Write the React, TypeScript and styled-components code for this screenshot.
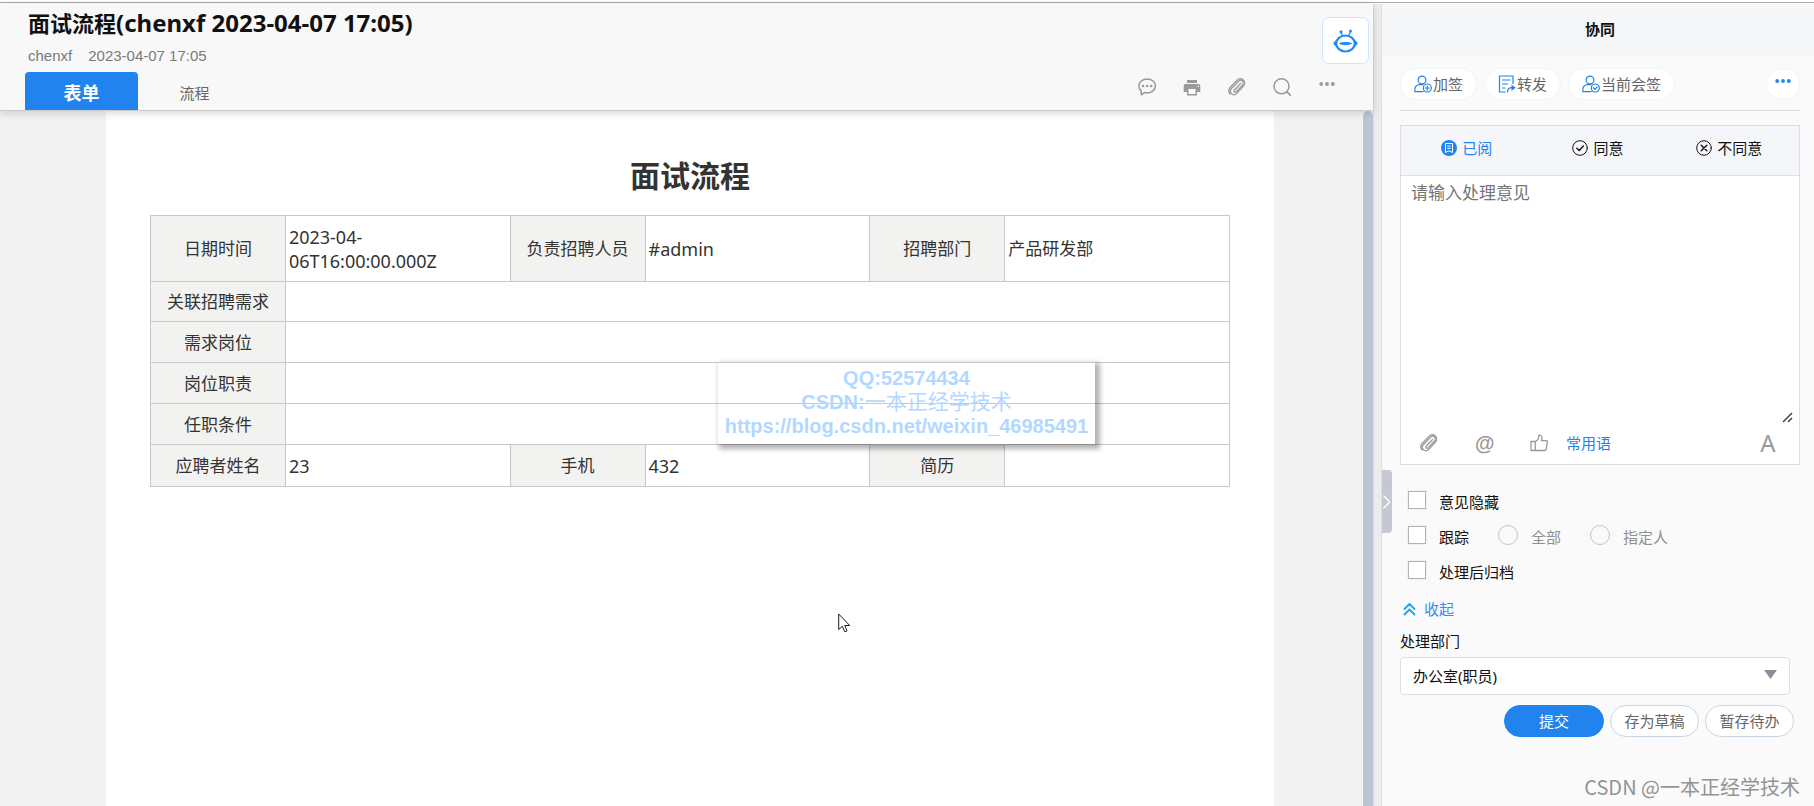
import React from "react";
import styled, { createGlobalStyle, css } from "styled-components";

const GlobalStyle = createGlobalStyle`
  *, *::before, *::after { box-sizing: border-box; }
  body {
    margin: 0;
    background: #fff;
    color: #111;
    font-family: "Noto Sans", "Noto Sans CJK SC", sans-serif;
    font-size: 15px;
    line-height: 20px;
  }
  button, input, textarea, select { font: inherit; color: inherit; }
  button { padding: 0; border: 0; background: none; cursor: pointer; }
  svg { display: block; flex: none; }
`;

const Page = styled.div`
  display: flex;
  flex-direction: column;
  min-height: 100vh;
`;

const TopRule = styled.div`
  height: 4px;
  padding-top: 2px;
  background: #a9a9a9 content-box;
  border-bottom: 1px solid #fff;
`;

const Columns = styled.div`
  display: flex;
  flex: 1;
`;

const Main = styled.main`
  display: flex;
  flex: 1;
  flex-direction: column;
  min-width: 0;
`;

const Header = styled.header`
  position: relative;
  z-index: 1;
  display: flex;
  justify-content: space-between;
  height: 107px;
  padding: 0 4px 0 25px;
  background: #f8f8f8;
  border-bottom: 1px solid #cbcbcb;
  box-shadow: 0 2px 8px rgba(0, 0, 0, 0.16);
`;

const Heading = styled.div`
  display: flex;
  flex-direction: column;
  justify-content: space-between;
`;

const Title = styled.h1`
  margin: 0;
  padding: 3px 3px 0;
  font-size: 22px;
  line-height: 32px;
  font-weight: 700;
`;

const TitleDetail = styled.span`
  font-size: 24px;
`;

const Meta = styled.div`
  display: flex;
  gap: 16px;
  padding-left: 3px;
  color: #7a7a7a;
  font-family: "Liberation Sans", sans-serif;
`;

const Tabs = styled.div`
  display: flex;
`;

const Tab = styled.button<{ $active?: boolean }>`
  width: 113px;
  height: 38px;
  padding-top: 3px;
  border-radius: 4px 4px 0 0;
  color: #666;
  ${(p) =>
    p.$active &&
    css`
      background: #2083ee;
      color: #fff;
      font-size: 18px;
      font-weight: 700;
    `}
`;

const HeaderSide = styled.div`
  display: flex;
  flex-direction: column;
  align-items: flex-end;
  justify-content: space-between;
  padding: 13px 0;
`;

const RobotButton = styled.button`
  display: grid;
  place-items: center;
  width: 47px;
  height: 47px;
  border: 1px solid #cfe4fa;
  border-radius: 7px;
  background: #fff;
  color: #1f8bff;
`;

const Tools = styled.div`
  display: flex;
  gap: 27px;
  padding-right: 33px;
  color: #999;
`;

const IconButton = styled.button`
  display: grid;
  place-items: center;
  width: 18px;
  height: 20px;
`;

const Body = styled.div`
  position: relative;
  display: flex;
  flex: 1;
  background: #f2f2f2;
`;

const Paper = styled.article`
  flex: 1;
  min-width: 0;
  margin: 0 89px 0 106px;
  padding: 45px 44px;
  background: #fff;
  color: #333;
`;

const ScrollThumb = styled.div`
  width: 10px;
  border-radius: 5px 5px 0 0;
  background: #bcc5d6;
`;

const FormTitle = styled.h2`
  margin: 0 0 19px;
  font-size: 30px;
  line-height: 40px;
  font-weight: 700;
  text-align: center;
`;

const FormArea = styled.div`
  position: relative;
`;

const FormTable = styled.table`
  width: 100%;
  border-collapse: collapse;
  table-layout: fixed;
  font-size: 17px;
  line-height: 24px;
`;

const LabelCol = styled.col`
  width: 12.5%;
`;

const Row = styled.tr<{ $height: number }>`
  height: ${(p) => p.$height}px;
`;

const LabelCell = styled.th`
  padding: 1px 0 0;
  border: 1px solid #c8c8c8;
  background: #f2f2f0;
  font-weight: 400;
`;

const ValueCell = styled.td<{ $latin?: boolean }>`
  padding: 1px 3px 0;
  border: 1px solid #c8c8c8;
  font-size: ${(p) => (p.$latin ? 18 : 17)}px;
`;

const Contact = styled.address`
  position: absolute;
  top: 147px;
  left: 568px;
  width: 377px;
  height: 82px;
  padding-top: 4px;
  box-shadow: 3px 3px 5px 2px rgba(0, 0, 0, 0.3);
  color: #b3d8ff;
  font: 700 20px/24px "Liberation Sans", "Noto Sans CJK SC", sans-serif;
  text-align: center;
  white-space: nowrap;
`;

const ContactName = styled.span`
  font-size: 21px;
  font-weight: 400;
`;

const Pointer = styled.svg`
  position: absolute;
  top: 502px;
  left: 838px;
`;

const Splitter = styled.div`
  width: 9px;
  background: #ececec;
  border: solid #dedede;
  border-width: 0 1px;
`;

const Side = styled.aside`
  position: relative;
  display: flex;
  flex-direction: column;
  width: 432px;
  background: #fafafa;
`;

const SideTitle = styled.h2`
  margin: 0;
  padding-left: 4px;
  background: #f5f6f8;
  font-size: 15px;
  line-height: 51px;
  font-weight: 700;
  text-align: center;
`;

const SideBody = styled.div`
  display: flex;
  flex: 1;
  flex-direction: column;
  padding: 13px 14px 4px 18px;
`;

const Actions = styled.div`
  display: flex;
  gap: 7px;
  padding-bottom: 10px;
  border-bottom: 1px solid #dfe0e2;
`;

const Chip = styled.button<{ $end?: boolean }>`
  display: flex;
  align-items: center;
  justify-content: center;
  gap: 1px;
  min-width: 32px;
  height: 32px;
  padding: 0 ${(p) => (p.$end ? 8 : 13)}px;
  margin-left: ${(p) => (p.$end ? "auto" : 0)};
  border: 1px solid #eef5f9;
  border-radius: 16px;
  background: #fff;
  color: #666;
  svg { color: #2083ee; }
`;

const Opinion = styled.section`
  margin-top: 14px;
  border: 1px solid #dcdee2;
  background: #fff;
`;

const Attitudes = styled.div`
  display: grid;
  grid-template-columns: repeat(3, 1fr);
  height: 50px;
  padding-right: 4px;
  background: #f4f6f9;
  border-bottom: 1px solid #dcdee2;
`;

const Attitude = styled.button<{ $active?: boolean }>`
  display: flex;
  align-items: center;
  justify-content: center;
  gap: 5px;
  padding-bottom: 6px;
  color: ${(p) => (p.$active ? "#2083ee" : "#111")};
`;

const OpinionText = styled.textarea`
  display: block;
  width: 100%;
  height: 248px;
  padding: 5px 10px;
  border: 0;
  outline: 0;
  resize: none;
  background: transparent;
  font-size: 17px;
  line-height: 24px;
  &::placeholder { color: #757575; }
`;

const TextWrap = styled.div`
  position: relative;
`;

const Grip = styled.svg`
  position: absolute;
  right: 5px;
  bottom: 1px;
`;

const OpinionTools = styled.div`
  display: flex;
  align-items: center;
  gap: 37px;
  height: 40px;
  padding: 0 22px 3px 19px;
  color: #999;
`;

const Phrases = styled.button`
  margin-left: -19px;
  color: #2083ee;
`;

const FontButton = styled(IconButton)`
  margin-left: auto;
`;

const Options = styled.div`
  display: flex;
  flex-direction: column;
  gap: 15px;
  padding: 25px 8px 0;
`;

const OptionRow = styled.div`
  display: flex;
  gap: 29px;
`;

const Choice = styled.label<{ $muted?: boolean }>`
  display: flex;
  align-items: center;
  gap: 13px;
  height: 20px;
  color: ${(p) => (p.$muted ? "#909090" : "#111")};
`;

const ChoiceText = styled.span`
  padding-top: 4px;
`;

const Checkbox = styled.input`
  appearance: none;
  width: 18px;
  height: 18px;
  margin: 0;
  border: 1px solid #b4b4b4;
  outline: 1px solid #f0f0f0;
  background: #fff;
`;

const Radio = styled.input`
  appearance: none;
  width: 20px;
  height: 20px;
  margin: 0;
  border: 1px solid #c4c4c4;
  border-radius: 50%;
`;

const Collapse = styled.button`
  display: flex;
  align-items: center;
  align-self: flex-start;
  gap: 8px;
  margin-top: 19px;
  padding-left: 3px;
  color: #2f8ff5;
  svg { color: #1ca4f5; }
`;

const DeptLabel = styled.label`
  margin-top: 12px;
`;

const SelectBox = styled.div`
  position: relative;
  margin: 6px 10px 0 0;
`;

const DeptSelect = styled.select`
  display: block;
  appearance: none;
  width: 100%;
  height: 38px;
  padding: 0 12px;
  border: 1px solid #dcdfe6;
  border-radius: 4px;
  background: #fff;
`;

const Caret = styled.svg`
  position: absolute;
  top: 13px;
  right: 13px;
  pointer-events: none;
`;

const Buttons = styled.div`
  display: flex;
  justify-content: flex-end;
  gap: 6px;
  margin: 10px 6px 0 0;
`;

const ActionButton = styled.button<{ $primary?: boolean }>`
  width: ${(p) => (p.$primary ? 100 : 89)}px;
  height: 32px;
  border: 1px solid ${(p) => (p.$primary ? "#2083ee" : "#c9d6e2")};
  border-radius: 16px;
  background: ${(p) => (p.$primary ? "#2083ee" : "#fff")};
  color: ${(p) => (p.$primary ? "#fff" : "#666")};
`;

const Credit = styled.footer`
  margin-top: auto;
  color: #949494;
  font: 400 20px/30px "Noto Sans CJK SC", sans-serif;
  text-align: right;
`;

const Fold = styled.button`
  position: absolute;
  top: 466px;
  left: 0;
  display: grid;
  place-items: center;
  width: 10px;
  height: 63px;
  border-radius: 0 4px 4px 0;
  background: #c5c8d0;
`;

const line = {
  fill: "none",
  stroke: "currentColor",
  strokeLinecap: "round",
  strokeLinejoin: "round",
} as const;

const RobotIcon = () => (
  <svg width="25" height="24" viewBox="0 0 25 24" fill="none" stroke="currentColor">
    <ellipse cx="12.5" cy="14.5" rx="9.3" ry="8" strokeWidth="2.2" />
    <path d="M3.3 11.2C1.5 12 .5 13.2.5 14.3s1 2.3 2.8 3zM21.7 11.2c1.8.8 2.800 2 2.800 3.100s-1 2.300-2.800 3z" fill="currentColor" stroke="none" />
    <path d="M6.500 14.500c2-.9 4-1 6-1s4 .1 6 1c-2 .9-4 1.200-6 1.200s-4-.3-6-1.200z" fill="currentColor" />
    <path d="M9.500 7L8 2.800M15.500 7l2-4.500" strokeWidth="1.300" />
    <circle cx="8" cy="2.800" r="1.500" fill="currentColor" stroke="none" />
    <circle cx="17.500" cy="2" r="1.500" fill="currentColor" stroke="none" />
  </svg>
);

const CommentIcon = () => (
  <svg width="18" height="18" viewBox="0 0 18 18">
    <path {...line} strokeWidth="1.500" d="M9.200 1C4.600 1 .8 4 .8 7.900c0 2 .9 3.700 2.400 5v3.900l3.300-2.200c.9.200 1.700.3 2.700.3 4.600 0 8.200-3.100 8.200-7S13.800 1 9.200 1z" />
    <g fill="currentColor">
      <circle cx="5" cy="8" r="1.300" />
      <circle cx="9.100" cy="8" r="1.300" />
      <circle cx="13.200" cy="8" r="1.300" />
    </g>
  </svg>
);

const PrinterIcon = () => (
  <svg width="18" height="18" viewBox="0 0 18 18" fill="currentColor">
    <path d="M4 2h10v3H4z" />
    <path fillRule="evenodd" d="M2.500 6h13A1.800 1.800 0 0 1 17.300 7.800V14H14v3.500H4V14H.7V7.800A1.800 1.800 0 0 1 2.500 6zM5.500 11v5h7v-5zM14.500 7.700v1.400h1.400V7.700z" />
  </svg>
);

const ClipIcon = () => (
  <svg width="18" height="18" viewBox="0 0 18 18">
    <path {...line} strokeWidth="1.300" d="M12.500 5.500L6.300 12.200a1.200 1.200 0 0 0 1.800 1.700l6.400-7a2.700 2.700 0 0 0-4-3.700L3.300 10.800a3.500 3.500 0 0 0 5.200 4.800l7-7.600a4.300 4.300 0 0 0-6.300-5.900L2.300 9.300a5 5 0 0 0-.3 6.500" />
  </svg>
);

const SearchIcon = () => (
  <svg width="18" height="18" viewBox="0 0 18 18">
    <circle {...line} strokeWidth="1.500" cx="8.500" cy="8.300" r="7.500" />
    <path {...line} strokeWidth="1.700" d="M14 13.800l3.400 3.300" />
  </svg>
);

const DotsIcon = () => (
  <svg width="16" height="12" viewBox="0 0 16 12" fill="currentColor">
    <circle cx="2.200" cy="3" r="1.900" />
    <circle cx="8" cy="3" r="1.900" />
    <circle cx="13.800" cy="3" r="1.900" />
  </svg>
);

const PersonIcon = ({ mark }: { mark: string }) => (
  <svg width="18" height="18" viewBox="0 0 18 18">
    <g {...line} strokeWidth="1.200">
      <circle cx="8" cy="5" r="3.900" />
      <path d="M9 9.600H5.500C2.500 9.600.8 11.800.8 15v1.600h8.400" />
      <circle cx="13.300" cy="13" r="4" />
      <path d={mark} />
    </g>
  </svg>
);

const ForwardIcon = () => (
  <svg width="18" height="18" viewBox="0 0 18 18">
    <g {...line} strokeWidth="1.200">
      <path d="M15 8.500V1H1.500v16H7M4.500 5h7.500M4.500 9h5M4.500 13H7" />
      <path d="M9.500 17c0-3 1.500-4.300 4.500-4.300" />
    </g>
    <path fill="currentColor" d="M13.500 9.800l4.300 2.900-4.300 3z" />
  </svg>
);

const ReadIcon = () => (
  <svg width="16" height="16" viewBox="0 0 16 16">
    <circle cx="8" cy="8" r="8" fill="currentColor" />
    <path d="M4.500 12.500v-9h7v9L8 10.800zM6.300 6h3.400M6.300 8.300h3.400" fill="none" stroke="#fff" />
  </svg>
);

const MarkIcon = ({ d }: { d: string }) => (
  <svg width="16" height="16" viewBox="0 0 16 16">
    <circle {...line} cx="8" cy="8" r="7.300" />
    <path {...line} strokeWidth="1.400" d={d} />
  </svg>
);

const ThumbIcon = () => (
  <svg width="18" height="18" viewBox="0 0 18 18">
    <path {...line} strokeWidth="1.300" d="M1 7.500h4.300v9H1zM5.300 7.500c2.200-.8 3.500-2.800 3.700-6.300 2.600-.4 3.700 2.300 2.500 5.400h4.800c.8 0 1.200.6 1.100 1.400l-1.200 7.200c-.1.800-.7 1.300-1.500 1.300H5.300z" />
  </svg>
);

const AtIcon = styled.span`
  font: 700 20px/20px "Liberation Sans", sans-serif;
`;

const LetterIcon = styled.span`
  font: 400 24px/20px "Noto Sans", sans-serif;
`;

const WIDE_ROWS = [
  { label: "关联招聘需求", height: 40 },
  { label: "需求岗位", height: 41 },
  { label: "岗位职责", height: 41 },
  { label: "任职条件", height: 41 },
];

export default function App() {
  return (
    <Page>
      <GlobalStyle />
      <TopRule />
      <Columns>
        <Main>
          <Header>
            <Heading>
              <Title>面试流程<TitleDetail>(chenxf 2023-04-07 17:05)</TitleDetail></Title>
              <Meta>
                <span>chenxf</span>
                <span>2023-04-07 17:05</span>
              </Meta>
              <Tabs>
                <Tab $active>表单</Tab>
                <Tab>流程</Tab>
              </Tabs>
            </Heading>
            <HeaderSide>
              <RobotButton aria-label="助手"><RobotIcon /></RobotButton>
              <Tools>
                <IconButton aria-label="评论"><CommentIcon /></IconButton>
                <IconButton aria-label="打印"><PrinterIcon /></IconButton>
                <IconButton aria-label="附件"><ClipIcon /></IconButton>
                <IconButton aria-label="搜索"><SearchIcon /></IconButton>
                <IconButton aria-label="更多"><DotsIcon /></IconButton>
              </Tools>
            </HeaderSide>
          </Header>
          <Body>
            <Paper>
              <FormTitle>面试流程</FormTitle>
              <FormArea>
                <FormTable>
                  <colgroup>
                    <LabelCol /><col /><LabelCol /><col /><LabelCol /><col />
                  </colgroup>
                  <tbody>
                    <Row $height={66}>
                      <LabelCell scope="row">日期时间</LabelCell>
                      <ValueCell $latin>2023-04-<br />06T16:00:00.000Z</ValueCell>
                      <LabelCell scope="row">负责招聘人员</LabelCell>
                      <ValueCell $latin>#admin</ValueCell>
                      <LabelCell scope="row">招聘部门</LabelCell>
                      <ValueCell>产品研发部</ValueCell>
                    </Row>
                    {WIDE_ROWS.map((row) => (
                      <Row key={row.label} $height={row.height}>
                        <LabelCell scope="row">{row.label}</LabelCell>
                        <ValueCell colSpan={5} />
                      </Row>
                    ))}
                    <Row $height={42}>
                      <LabelCell scope="row">应聘者姓名</LabelCell>
                      <ValueCell $latin>23</ValueCell>
                      <LabelCell scope="row">手机</LabelCell>
                      <ValueCell $latin>432</ValueCell>
                      <LabelCell scope="row">简历</LabelCell>
                      <ValueCell />
                    </Row>
                  </tbody>
                </FormTable>
                <Contact>
                  QQ:52574434
                  <br />
                  CSDN:<ContactName>一本正经学技术</ContactName>
                  <br />
                  https://blog.csdn.net/weixin_46985491
                </Contact>
              </FormArea>
            </Paper>
            <ScrollThumb />
            <Pointer width="13" height="20" viewBox="0 0 13 20">
              <path d="M.7 1v15.500l3.600-3.200 2.500 5.500 2.300-1-2.400-5.300h5z" fill="#fff" stroke="#1a1a2a" />
            </Pointer>
          </Body>
        </Main>
        <Splitter />
        <Side>
          <SideTitle>协同</SideTitle>
          <SideBody>
            <Actions>
              <Chip><PersonIcon mark="M13.300 11v4M11.300 13h4" />加签</Chip>
              <Chip><ForwardIcon />转发</Chip>
              <Chip><PersonIcon mark="M11.500 13l1.400 1.400 2.300-2.500" />当前会签</Chip>
              <Chip $end aria-label="更多"><DotsIcon /></Chip>
            </Actions>
            <Opinion>
              <Attitudes>
                <Attitude $active><ReadIcon />已阅</Attitude>
                <Attitude><MarkIcon d="M4.800 8.200l2.400 2.300 4.200-4.500" />同意</Attitude>
                <Attitude><MarkIcon d="M5.200 5.200l5.600 5.600M10.800 5.200l-5.600 5.600" />不同意</Attitude>
              </Attitudes>
              <TextWrap>
                <OpinionText aria-label="处理意见" placeholder="请输入处理意见" />
                <Grip width="12" height="12" viewBox="0 0 12 12">
                  <path d="M1 11L10 2M6 11l4-4" stroke="#444" strokeWidth="1.500" />
                </Grip>
              </TextWrap>
              <OpinionTools>
                <IconButton aria-label="附件"><ClipIcon /></IconButton>
                <IconButton aria-label="提及"><AtIcon>@</AtIcon></IconButton>
                <IconButton aria-label="点赞"><ThumbIcon /></IconButton>
                <Phrases>常用语</Phrases>
                <FontButton aria-label="字体"><LetterIcon>A</LetterIcon></FontButton>
              </OpinionTools>
            </Opinion>
            <Options>
              <Choice><Checkbox type="checkbox" /><ChoiceText>意见隐藏</ChoiceText></Choice>
              <OptionRow>
                <Choice><Checkbox type="checkbox" /><ChoiceText>跟踪</ChoiceText></Choice>
                <Choice $muted><Radio type="radio" name="track" /><ChoiceText>全部</ChoiceText></Choice>
                <Choice $muted><Radio type="radio" name="track" /><ChoiceText>指定人</ChoiceText></Choice>
              </OptionRow>
              <Choice><Checkbox type="checkbox" /><ChoiceText>处理后归档</ChoiceText></Choice>
            </Options>
            <Collapse>
              <svg width="13" height="14" viewBox="0 0 13 14">
                <path {...line} strokeWidth="1.800" d="M1.500 7l5-5 5 5M1.500 12.500l5-5 5 5" />
              </svg>
              收起
            </Collapse>
            <DeptLabel htmlFor="dept">处理部门</DeptLabel>
            <SelectBox>
              <DeptSelect id="dept">
                <option>办公室(职员)</option>
              </DeptSelect>
              <Caret width="13" height="9" viewBox="0 0 13 9">
                <path d="M0 0h13L6.500 9z" fill="#8a8f99" />
              </Caret>
            </SelectBox>
            <Buttons>
              <ActionButton $primary>提交</ActionButton>
              <ActionButton>存为草稿</ActionButton>
              <ActionButton>暂存待办</ActionButton>
            </Buttons>
            <Credit>CSDN @一本正经学技术</Credit>
          </SideBody>
          <Fold aria-label="收起侧栏">
            <svg width="8" height="14" viewBox="0 0 8 14">
              <path {...line} stroke="#fff" strokeWidth="1.300" d="M.8 1l6 6-6 6" />
            </svg>
          </Fold>
        </Side>
      </Columns>
    </Page>
  );
}
